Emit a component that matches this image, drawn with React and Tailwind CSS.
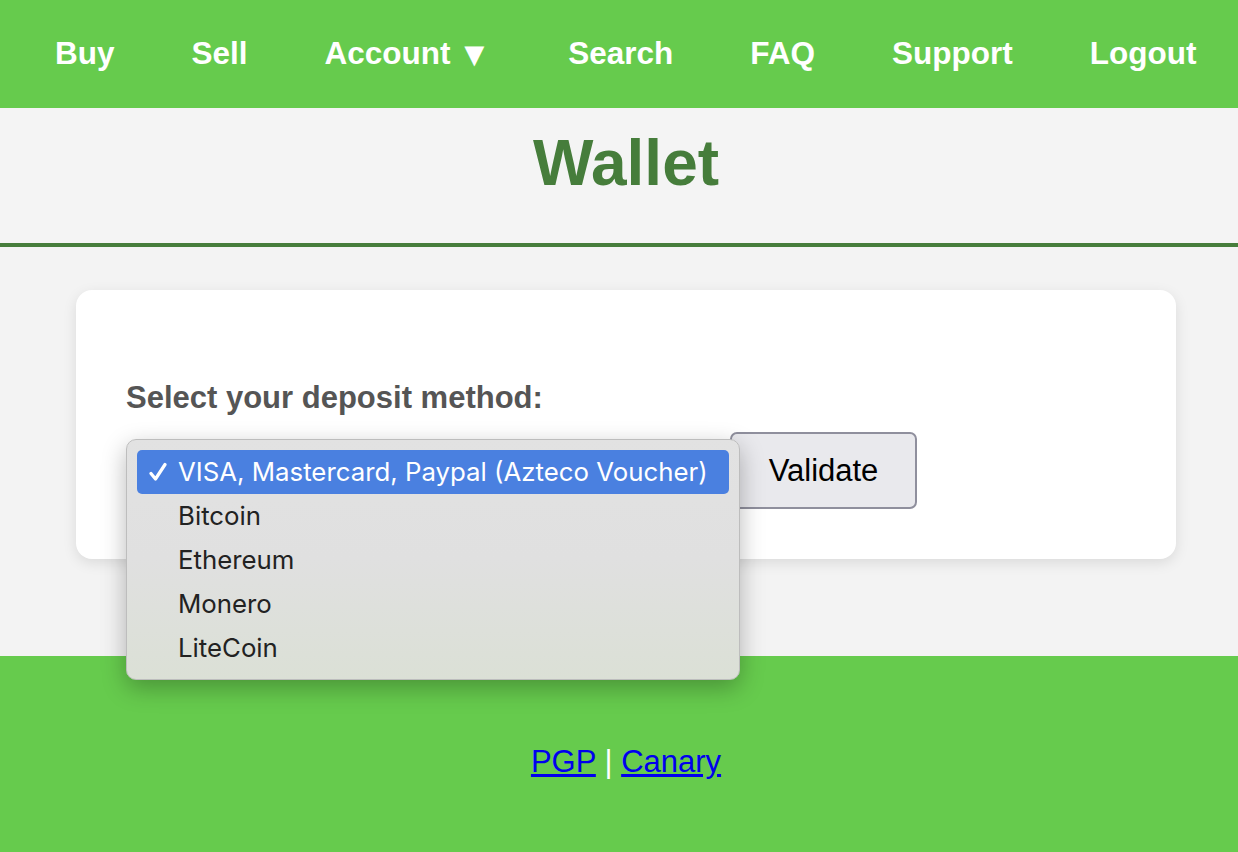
import React from "react";

const NAV = ["Buy", "Sell", "Account", "Search", "FAQ", "Support", "Logout"];
const OPTIONS = [
  "VISA, Mastercard, Paypal (Azteco Voucher)",
  "Bitcoin",
  "Ethereum",
  "Monero",
  "LiteCoin",
];

const sans = { fontFamily: '"Liberation Sans", Arial, Helvetica, sans-serif' };

function Check() {
  return (
    <svg width="18" height="20" viewBox="0 0 18 20" className="ml-[12px]">
      <path
        d="M2 11.5 L6.5 17 L16 2.5"
        fill="none"
        stroke="white"
        strokeWidth="3.2"
        strokeLinecap="round"
        strokeLinejoin="round"
      />
    </svg>
  );
}

function OptionList() {
  return (
    <div
      className="absolute left-0 top-[7px] z-10 w-[614px] h-[241px] rounded-[10px] border border-[#bdbdbd] bg-gradient-to-b from-[#e2e2e2] via-[#e0e0e0] to-[#dbe0d6] px-[10px] pt-[10px] shadow-[0_8px_24px_rgba(0,0,0,0.28)]"
      style={{ fontFamily: "Inter, 'Noto Sans', sans-serif" }}
    >
      {OPTIONS.map((opt, i) => (
        <div
          key={opt}
          className={
            i === 0
              ? "flex h-[44px] items-center rounded-[5px] bg-[#4a80e0] text-white"
              : "flex h-[44px] items-center text-[#222]"
          }
        >
          <span className="flex w-[41px] items-center">{i === 0 && <Check />}</span>
          <span className="whitespace-nowrap text-[25.8px] leading-none">{opt}</span>
        </div>
      ))}
    </div>
  );
}

export default function App() {
  return (
    <div className="min-h-screen bg-[#f3f3f3]" style={sans}>
      {/* Nav */}
      <nav className="flex h-[108px] items-center bg-[#66cb4d] pl-[55px]">
        {NAV.map((item) => (
          <a
            key={item}
            href="#"
            className="mr-[77px] flex items-center whitespace-nowrap text-[31.5px] font-bold leading-none text-white"
          >
            {item}
            {item === "Account" && <span className="ml-[7px] text-[34px] leading-none">▼</span>}
          </a>
        ))}
      </nav>

      {/* Title */}
      <header className="h-[139px] border-b-4 border-[#467d3b] bg-[#f4f4f4] pl-[14px] pt-[23px] text-center">
        <h1 className="text-[64px] font-bold leading-none text-[#467d3b]">Wallet</h1>
      </header>

      {/* Main */}
      <main className="pt-[43px] pb-[97px]">
        <div className="ml-[76px] h-[269px] w-[1100px] rounded-[16px] bg-white pl-[50px] pt-[92px] shadow-[0_4px_14px_rgba(0,0,0,0.1)]">
          <label className="block text-[31px] font-bold leading-none text-[#555]">
            Select your deposit method:
          </label>
          <div className="relative mt-[19px] flex">
            <div className="w-[604px]" />
            <OptionList />
            <button className="h-[77px] w-[187px] rounded-[7px] border-2 border-[#8f8f9d] bg-[#e9e9ed] text-[31px] leading-none text-black">
              Validate
            </button>
          </div>
        </div>
      </main>

      {/* Footer */}
      <footer className="h-[196px] bg-[#66cb4d] pl-[14px] pt-[90px] text-center text-[31px] leading-none">
        <a href="#" className="text-[#0000ee] underline">PGP</a>
        <span className="text-white"> | </span>
        <a href="#" className="text-[#0000ee] underline">Canary</a>
      </footer>
    </div>
  );
}
